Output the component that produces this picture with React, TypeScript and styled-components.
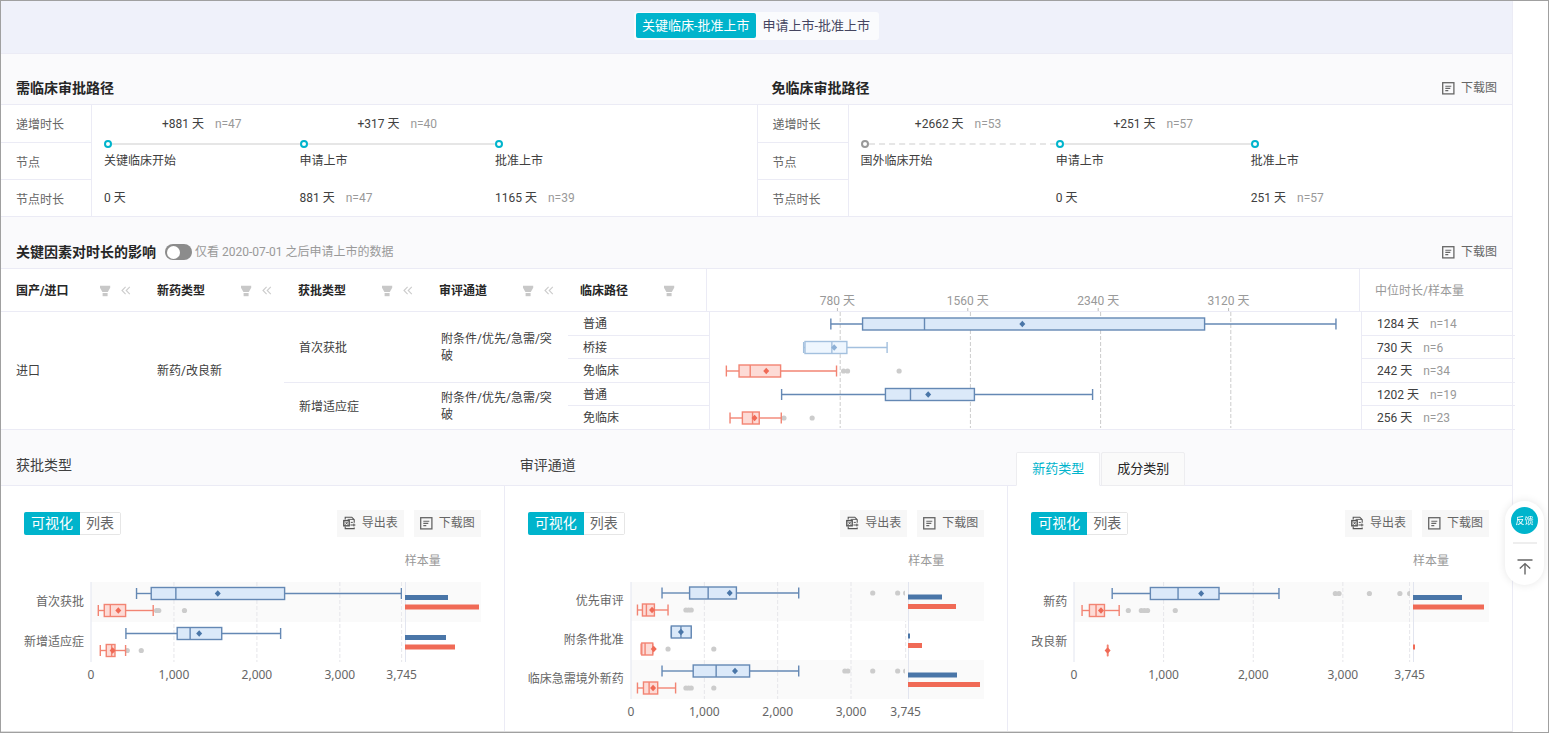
import React, { useState } from "react";
import styled, { createGlobalStyle, css } from "styled-components";

const color = {
  brand: "#00b4cc",
  line: "#ebebf5",
  head: "#fafafc",
  text: "#404040",
  strong: "#262626",
  sub: "#666",
  muted: "#999",
  blue: "#4a76a8",
  red: "#f06a56",
};

const GlobalStyle = createGlobalStyle`
  *, *::before, *::after { box-sizing: border-box; }
  body {
    margin: 0;
    background: #fff;
    color: ${color.text};
    font: 12px/18px Roboto, "Noto Sans CJK SC", sans-serif;
  }
  button { font: inherit; color: inherit; border: 0; padding: 0; background: none; cursor: pointer; }
  h2, ol { margin: 0; padding: 0; list-style: none; }
`;

const Frame = styled.div`
  display: flex;
  min-height: 100vh;
  padding-right: 35px;
  border: 1px solid #a0a0a0;
  overflow: hidden;
`;

const Main = styled.main`
  display: flex;
  flex: 1;
  flex-direction: column;
  min-width: 0;
  border-right: 1px solid ${color.line};
  border-bottom: 1px solid #ddd;
`;

/* Top switch */

const TopBar = styled.div`
  display: flex;
  justify-content: center;
  padding: 11px 0 13px;
  background: #eff1fa;
  border-bottom: 1px solid ${color.line};
`;

const Switcher = styled.div`
  display: flex;
  padding: 1px 2px 2px;
  background: #fafbfd;
  border-radius: 3px;
`;

const SwitchButton = styled.button<{ $active: boolean }>`
  padding: 0 ${(p) => (p.$active ? 6 : 7)}px;
  border-radius: 2px;
  font-size: 13px;
  line-height: 25px;
  color: ${(p) => (p.$active ? "#fff" : "#454560")};
  background: ${(p) => (p.$active ? color.brand : "transparent")};
`;

/* Section heads */

const SectionHead = styled.div<{ $top: number }>`
  display: flex;
  align-items: center;
  padding: ${(p) => p.$top}px 15px 6px;
  background: ${color.head};
  border-bottom: 1px solid ${color.line};
`;

const Title = styled.h2<{ $plain?: boolean }>`
  font-size: 14px;
  line-height: 20px;
  font-weight: ${(p) => (p.$plain ? 400 : 700)};
  color: ${(p) => (p.$plain ? color.text : color.strong)};
`;

const HalfTitle = styled(Title)`
  width: calc(50% + 15px);
`;

const ToolButton = styled.button<{ $filled?: boolean }>`
  display: flex;
  align-items: center;
  gap: 6px;
  color: ${color.sub};
  line-height: 20px;
  ${(p) =>
    p.$filled
      ? css`
          padding: 3px 6px 4px;
          background: #f7f7f7;
        `
      : css`
          margin-left: auto;
        `}
`;

/* Approval paths */

const Paths = styled.div`
  display: grid;
  grid-template-columns: 1fr 1fr;
  border-bottom: 1px solid ${color.line};
`;

const Path = styled.section`
  display: grid;
  grid-template-columns: 91px 1fr;
  & + & {
    border-left: 1px solid ${color.line};
  }
`;

const PathLabels = styled.div`
  display: grid;
  grid-template-rows: repeat(3, 1fr);
  border-right: 1px solid ${color.line};
`;

const PathLabel = styled.div`
  display: flex;
  align-items: center;
  padding: 3px 0 0 15px;
  color: ${color.sub};
  & + & {
    border-top: 1px solid ${color.line};
  }
`;

const Steps = styled.ol`
  display: grid;
  grid-template-columns: repeat(3, 1fr);
  padding: 0 66px 0 12px;
`;

const Increment = styled.div`
  display: flex;
  justify-content: center;
  height: 35px;
  line-height: 38px;
`;

const Track = styled.div<{ $kind: "solid" | "dashed" | "none" }>`
  display: flex;
  align-items: center;
  height: 8px;
  &::after {
    content: "";
    flex: 1;
    border-top: 2px ${(p) => p.$kind} #e6e6e6;
  }
`;

const Dot = styled.span<{ $muted?: boolean }>`
  width: 8px;
  height: 8px;
  border: 2px solid ${(p) => (p.$muted ? "#999" : color.brand)};
  border-radius: 50%;
  background: #fff;
`;

const StepName = styled.div`
  height: 25px;
  line-height: 27px;
`;

const StepTime = styled.div`
  padding: 13px 0 5px;
  line-height: 25px;
`;

const Count = styled.span`
  margin-left: 11px;
  color: ${color.muted};
`;

/* Factor table */

const Toggle = styled.label`
  display: flex;
  align-items: center;
  gap: 3px;
  margin-left: 9px;
  line-height: 20px;
  color: ${color.muted};
`;

const ToggleInput = styled.input`
  appearance: none;
  display: flex;
  align-items: center;
  width: 27px;
  height: 16px;
  margin: 0;
  padding: 1px 2px;
  border-radius: 8px;
  background: #8c8c8c;
  cursor: pointer;
  &::before {
    content: "";
    width: 13px;
    height: 13px;
    border-radius: 50%;
    background: #fff;
  }
  &:checked {
    justify-content: flex-end;
    background: ${color.brand};
  }
`;

const Table = styled.table<{ $spread?: number }>`
  width: calc(100% + ${(p) => p.$spread ?? 0}px);
  table-layout: fixed;
  border-collapse: separate;
  border-spacing: 0;
`;

const HeadCell = styled.th`
  height: 43px;
  padding: 2px 10px 0 15px;
  text-align: left;
  color: ${color.strong};
  border-bottom: 1px solid ${color.line};
`;

const HeadInner = styled.div`
  display: flex;
  align-items: center;
`;

const HeadName = styled.span`
  width: 83px;
`;

const IconButton = styled.button`
  display: flex;
  margin-right: 10px;
`;

const AxisHeadCell = styled(HeadCell)`
  padding: 0;
  border-left: 1px solid ${color.line};
  border-right: 1px solid ${color.line};
`;

const MedianHeadCell = styled(HeadCell)`
  font-weight: 400;
  color: ${color.muted};
`;

const Row = styled.tr`
  height: 23px;
  &:nth-child(odd) {
    height: 24px;
  }
`;

const Cell = styled.td<{ $right?: boolean }>`
  padding: 2px 15px 0;
  line-height: 17px;
  border-bottom: 1px solid ${color.line};
  border-right: ${(p) => (p.$right ? `1px solid ${color.line}` : 0)};
`;

const ChartCell = styled(Cell)`
  padding: 0;
  vertical-align: top;
`;

const Chart = styled.svg`
  display: block;
  width: 100%;
  overflow: visible;
`;

/* Distribution panels */

const PanelHeads = styled.div`
  display: grid;
  grid-template-columns: repeat(3, 1fr);
  height: 56px;
  background: ${color.head};
  border-bottom: 1px solid ${color.line};
`;

const PanelHead = styled.div`
  padding: 25px 15px 0;
`;

const Tabs = styled.div`
  display: flex;
  gap: 1px;
  margin-bottom: -1px;
  padding: 22px 8px 0;
`;

const Tab = styled.button<{ $active: boolean }>`
  padding: 0 15px;
  font-size: 13px;
  line-height: 32px;
  border: 1px solid #ededf0;
  border-bottom-color: ${(p) => (p.$active ? "#fff" : "#ededf0")};
  border-radius: 2px 2px 0 0;
  color: ${(p) => (p.$active ? color.brand : color.strong)};
  background: ${(p) => (p.$active ? "#fff" : "#fafafa")};
`;

const Panels = styled.div`
  display: grid;
  flex: 1;
  grid-template-columns: repeat(3, 1fr);
`;

const PanelBody = styled.section`
  padding: 24px 23px 8px;
  &:not(:last-child) {
    border-right: 1px solid ${color.line};
  }
`;

const PanelTools = styled.div`
  display: flex;
  align-items: center;
  gap: 10px;
`;

const ViewSwitch = styled.div`
  display: flex;
  margin-right: auto;
  border: 1px solid #e6e6e6;
  border-radius: 2px;
`;

const ViewButton = styled.button<{ $active: boolean }>`
  margin: ${(p) => (p.$active ? "-1px 0 -1px -1px" : "0")};
  padding: ${(p) => (p.$active ? "1px 7px" : "0 6px")};
  border-radius: ${(p) => (p.$active ? "2px 0 0 2px" : "0")};
  font-size: 14px;
  line-height: 21px;
  color: ${(p) => (p.$active ? "#fff" : color.sub)};
  background: ${(p) => (p.$active ? color.brand : "#fff")};
`;

const Plot = styled.div`
  display: grid;
  grid-template-columns: auto 1fr 79px;
  margin-top: 15px;
`;

const SampleTitle = styled.div`
  grid-column: 3;
  padding: 0 3px 12px;
  color: ${color.muted};
`;

const PlotLabels = styled.div`
  grid-column: 1;
  padding-right: 7px;
  text-align: right;
  color: ${color.sub};
`;

const PlotLabel = styled.div<{ $h: number }>`
  height: ${(p) => p.$h}px;
  line-height: ${(p) => p.$h}px;
`;

const AxisText = styled.text`
  font: 12px "Noto Sans", sans-serif;
  fill: ${color.sub};
`;

const HeadAxisText = styled.text`
  font-weight: 400;
  fill: ${color.muted};
`;

/* Floating tools */

const Floating = styled.aside`
  position: fixed;
  right: 5px;
  bottom: 148px;
  display: flex;
  flex-direction: column;
  align-items: center;
  width: 39px;
  padding: 6px 0 8px;
  border-radius: 20px;
  background: #fff;
  box-shadow: 0 0 8px rgba(0, 0, 0, 0.1);
`;

const Feedback = styled.button`
  width: 27px;
  height: 27px;
  border-radius: 50%;
  font-size: 9px;
  color: #fff;
  background: ${color.brand};
`;

const Divider = styled.span`
  width: 24px;
  height: 2px;
  margin: 8px 0 14px;
  background: #eee;
`;

const TopButton = styled.button`
  display: flex;
  padding: 1px 0 2px;
`;

/* Icons */

const DownloadIcon = () => (
  <svg width="13" height="13" viewBox="0 0 13 13" fill="none" stroke="#666" aria-hidden="true">
    <rect x="0.7" y="0.7" width="11.2" height="11.2" strokeWidth="1.3" />
    <path d="M3.3 4.2h6M3.3 6.4h5M3.3 8.6h3" strokeWidth="1.1" />
  </svg>
);

const ExportIcon = () => (
  <svg width="13" height="14" viewBox="0 0 13 14" fill="none" stroke="#555" aria-hidden="true">
    <path d="M2.2 3.6V1.2h6.6l2.4 2.5v3M2.2 10.6v2h9v-1.2" strokeWidth="1.1" />
    <path d="M4.6 3.4h6.4" strokeWidth="0.9" />
    <rect x="0.8" y="4.6" width="5.4" height="5.2" strokeWidth="1.4" />
    <path d="M2.4 5.8l2.4 2.8M4.8 5.8L2.4 8.6" strokeWidth="1" />
    <path d="M7.8 6.4h2M7.4 9h5M10.9 7.6v2.8" strokeWidth="1" />
  </svg>
);

const FilterIcon = () => (
  <svg width="12" height="12" viewBox="0 0 12 12" fill="#c8c8c8" aria-hidden="true">
    <path d="M1 0.8h10.2v2L8.8 7H3.4L1 2.8z" />
    <path d="M3.6 8h5v3.2h-5z" />
  </svg>
);

const CollapseIcon = () => (
  <svg width="10" height="9" viewBox="0 0 10 9" fill="none" stroke="#ccc" strokeWidth="1.1" aria-hidden="true">
    <path d="M4.6 0.8L1 4.5l3.6 3.7M8.8 0.8L5.2 4.5l3.6 3.7" />
  </svg>
);

const ToTopIcon = () => (
  <svg width="16" height="16" viewBox="0 0 16 16" fill="none" stroke="#666" strokeWidth="1.4" aria-hidden="true">
    <path d="M0.5 1h15M8 15.5V5M2.8 9.6L8 4.6l5.2 5" />
  </svg>
);

/* Box plots */

type Tone = "blue" | "light" | "red";

interface Box {
  tone: Tone;
  /** lower whisker, first quartile, median, third quartile, upper whisker */
  q: [number, number, number, number, number];
  mean: number;
  out?: number[];
}

const tones: Record<Tone, { fill: string; stroke: string; mark: string }> = {
  blue: { fill: "#dbe9f9", stroke: "#6488b4", mark: color.blue },
  light: { fill: "#eef6fe", stroke: "#a3c0de", mark: "#8db0d6" },
  red: { fill: "#fddbd6", stroke: "#f28473", mark: color.red },
};

function BoxMark({ box, cy, domain }: { box: Box; cy: number; domain: number }) {
  const x = (v: number) => `${(v / domain) * 100}%`;
  const [lo, q1, med, q3, hi] = box.q;
  const t = tones[box.tone];
  return (
    <g>
      {(box.out ?? []).map((v, i) => (
        <circle key={i} cx={x(v)} cy={cy} r="2.6" fill="#ccc" />
      ))}
      <g stroke={t.stroke} strokeWidth="1.4">
        <line x1={x(lo)} x2={x(q1)} y1={cy} y2={cy} />
        <line x1={x(q3)} x2={x(hi)} y1={cy} y2={cy} />
        <line x1={x(lo)} x2={x(lo)} y1={cy - 5.5} y2={cy + 5.5} />
        <line x1={x(hi)} x2={x(hi)} y1={cy - 5.5} y2={cy + 5.5} />
        {q3 > q1 && (
          <rect x={x(q1)} y={cy - 6} width={x(q3 - q1)} height="12" fill={t.fill} />
        )}
        <line x1={x(med)} x2={x(med)} y1={cy - 6} y2={cy + 6} />
      </g>
      <svg x={x(box.mean)} y={cy} overflow="visible">
        <path d="M0 -3.2L3 0L0 3.2L-3 0z" fill={t.mark} />
      </svg>
    </g>
  );
}

const FACTOR_DOMAIN = 3900;
const factorTicks = [780, 1560, 2340, 3120];

const factorBoxes: Box[] = [
  { tone: "blue", q: [724, 914, 1285, 2963, 3750], mean: 1871 },
  { tone: "light", q: [561, 569, 730, 820, 1061], mean: 744 },
  { tone: "red", q: [98, 174, 241, 423, 758], mean: 337, out: [800, 824, 1133] },
  { tone: "blue", q: [429, 1051, 1201, 1584, 2292], mean: 1307 },
  { tone: "red", q: [120, 194, 255, 295, 427], mean: 267, out: [443, 612] },
];

const FactorChart = () => (
  <Chart height="116" role="img" aria-label="时长分布">
    {factorTicks.map((v) => {
      const x = `${(v / FACTOR_DOMAIN) * 100}%`;
      return <line key={v} x1={x} x2={x} y1="0" y2="116" stroke="#ccc" strokeDasharray="4 2" />;
    })}
    {factorBoxes.map((b, i) => (
      <BoxMark key={i} box={b} cy={12 + i * 23.5} domain={FACTOR_DOMAIN} />
    ))}
  </Chart>
);

const FactorAxis = () => (
  <Chart height="42" role="img" aria-label="时长刻度">
    {factorTicks.map((v) => {
      const x = `${(v / FACTOR_DOMAIN) * 100}%`;
      return (
        <g key={v}>
          <HeadAxisText x={x} y="36" textAnchor="middle">
            {v} 天
          </HeadAxisText>
          <line x1={x} x2={x} y1="39" y2="42" stroke="#bbb" />
        </g>
      );
    })}
  </Chart>
);

interface Category {
  name: string;
  boxes: Box[];
  bars: { tone: "blue" | "red"; size: number }[];
}

const PLOT_DOMAIN = 3745;
const plotTicks = [0, 1000, 2000, 3000, 3745];

function Distribution({ data, rowHeight }: { data: Category[]; rowHeight: number }) {
  const height = data.length * rowHeight;
  const offset = (tone: Tone) => rowHeight / 2 + (tone === "red" ? 8.5 : -8.5);
  const stripes = data.map((d, i) =>
    i % 2 === 0 ? (
      <rect key={d.name} x="0" y={i * rowHeight} width="100%" height={rowHeight} fill="#fafafa" />
    ) : null
  );
  return (
    <Plot>
      <SampleTitle>样本量</SampleTitle>
      <PlotLabels>
        {data.map((d) => (
          <PlotLabel key={d.name} $h={rowHeight}>
            {d.name}
          </PlotLabel>
        ))}
      </PlotLabels>
      <Chart height={height + 24} role="img" aria-label="时长箱线图">
        {stripes}
        {plotTicks.map((v) => {
          const x = `${(v / PLOT_DOMAIN) * 100}%`;
          return (
            <g key={v}>
              <line
                x1={x}
                x2={x}
                y1="0"
                y2={height}
                stroke={v ? "#e6e6ea" : "#e2e5ef"}
                strokeDasharray={v ? "4 2" : undefined}
              />
              <AxisText x={x} y={height + 17} textAnchor="middle">
                {v.toLocaleString("en-US")}
              </AxisText>
            </g>
          );
        })}
        {data.map((d, i) =>
          d.boxes.map((b) => (
            <BoxMark key={d.name + b.tone} box={b} cy={i * rowHeight + offset(b.tone)} domain={PLOT_DOMAIN} />
          ))
        )}
      </Chart>
      <Chart height={height} role="img" aria-label="样本量">
        {stripes}
        <line x1="3.5" x2="3.5" y1="0" y2={height} stroke="#e2e5ef" />
        {data.map((d, i) =>
          d.bars.map((b) => (
            <rect
              key={d.name + b.tone}
              x="3"
              y={i * rowHeight + rowHeight / 2 + (b.tone === "red" ? 2.5 : -7)}
              width={b.size}
              height="5"
              fill={color[b.tone]}
            />
          ))
        )}
      </Chart>
    </Plot>
  );
}

const approvalType: Category[] = [
  {
    name: "首次获批",
    boxes: [
      { tone: "blue", q: [549, 726, 1023, 2334, 3742], mean: 1528 },
      { tone: "red", q: [88, 160, 233, 417, 750], mean: 329, out: [790, 817, 1127] },
    ],
    bars: [
      { tone: "blue", size: 43 },
      { tone: "red", size: 74 },
    ],
  },
  {
    name: "新增适应症",
    boxes: [
      { tone: "blue", q: [421, 1039, 1195, 1576, 2286], mean: 1304 },
      { tone: "red", q: [112, 184, 249, 289, 417], mean: 261, out: [437, 606] },
    ],
    bars: [
      { tone: "blue", size: 41 },
      { tone: "red", size: 50 },
    ],
  },
];

const reviewChannel: Category[] = [
  {
    name: "优先审评",
    boxes: [
      { tone: "blue", q: [423, 799, 1052, 1437, 2287], mean: 1346, out: [3296, 3636, 3745] },
      { tone: "red", q: [88, 156, 210, 319, 505], mean: 287, out: [749, 785, 821] },
    ],
    bars: [
      { tone: "blue", size: 34 },
      { tone: "red", size: 48 },
    ],
  },
  {
    name: "附条件批准",
    boxes: [
      { tone: "blue", q: [550, 550, 681, 821, 821], mean: 681 },
      { tone: "red", q: [138, 147, 192, 296, 296], mean: 310, out: [505, 1129] },
    ],
    bars: [
      { tone: "blue", size: 2 },
      { tone: "red", size: 14 },
    ],
  },
  {
    name: "临床急需境外新药",
    boxes: [
      { tone: "blue", q: [423, 848, 1161, 1617, 2287], mean: 1418, out: [2916, 2957, 3296, 3636, 3745] },
      { tone: "red", q: [88, 170, 247, 364, 608], mean: 301, out: [749, 785, 821, 1129] },
    ],
    bars: [
      { tone: "blue", size: 49 },
      { tone: "red", size: 72 },
    ],
  },
];

const drugType: Category[] = [
  {
    name: "新药",
    boxes: [
      { tone: "blue", q: [426, 852, 1161, 1618, 2287], mean: 1419, out: [2916, 2957, 3296, 3636, 3745] },
      { tone: "red", q: [90, 172, 246, 340, 504], mean: 301, out: [606, 751, 786, 821, 1130] },
    ],
    bars: [
      { tone: "blue", size: 49 },
      { tone: "red", size: 71 },
    ],
  },
  {
    name: "改良新",
    boxes: [{ tone: "red", q: [375, 375, 375, 375, 375], mean: 375 }],
    bars: [{ tone: "red", size: 2 }],
  },
];

/* Sections */

interface Step {
  name: string;
  time?: string;
  n?: string;
  gap?: string;
  gapN?: string;
  line: "solid" | "dashed" | "none";
}

const clinicalPath: Step[] = [
  { name: "关键临床开始", time: "0 天", gap: "+881 天", gapN: "n=47", line: "solid" },
  { name: "申请上市", time: "881 天", n: "n=47", gap: "+317 天", gapN: "n=40", line: "solid" },
  { name: "批准上市", time: "1165 天", n: "n=39", line: "none" },
];

const exemptPath: Step[] = [
  { name: "国外临床开始", gap: "+2662 天", gapN: "n=53", line: "dashed" },
  { name: "申请上市", time: "0 天", gap: "+251 天", gapN: "n=57", line: "solid" },
  { name: "批准上市", time: "251 天", n: "n=57", line: "none" },
];

const ApprovalPath = ({ steps }: { steps: Step[] }) => (
  <Path>
    <PathLabels>
      {["递增时长", "节点", "节点时长"].map((l) => (
        <PathLabel key={l}>{l}</PathLabel>
      ))}
    </PathLabels>
    <Steps>
      {steps.map((s) => (
        <li key={s.name}>
          <Increment>
            {s.gap}
            {s.gapN && <Count>{s.gapN}</Count>}
          </Increment>
          <Track $kind={s.line}>
            <Dot $muted={s.line === "dashed"} />
          </Track>
          <StepName>{s.name}</StepName>
          <StepTime>
            {s.time}
            {s.n && <Count>{s.n}</Count>}
          </StepTime>
        </li>
      ))}
    </Steps>
  </Path>
);

const columns = ["国产/进口", "新药类型", "获批类型", "审评通道", "临床路径"];

const FactorColumns = ({ width, last }: { width: number; last: number }) => (
  <colgroup>
    {columns.map((c, i) => (
      <col key={c} width={i === 0 ? 141 : width} />
    ))}
    <col />
    <col width={last} />
  </colgroup>
);

const Median = ({ days, n }: { days: number; n: number }) => (
  <Cell>
    {days} 天<Count>n={n}</Count>
  </Cell>
);

const FactorTable = () => (
  <div>
    <Table>
      <FactorColumns width={141} last={152} />
      <thead>
        <tr>
          {columns.map((c, i) => (
            <HeadCell key={c} scope="col">
              <HeadInner>
                <HeadName>{c}</HeadName>
                <IconButton aria-label={`筛选${c}`}>
                  <FilterIcon />
                </IconButton>
                {i < columns.length - 1 && (
                  <button aria-label={`收起${c}`}>
                    <CollapseIcon />
                  </button>
                )}
              </HeadInner>
            </HeadCell>
          ))}
          <AxisHeadCell scope="col">
            <FactorAxis />
          </AxisHeadCell>
          <MedianHeadCell scope="col">中位时长/样本量</MedianHeadCell>
        </tr>
      </thead>
    </Table>
    <Table $spread={3}>
      <FactorColumns width={142} last={153} />
      <tbody>
        <Row>
          <Cell rowSpan={5}>进口</Cell>
          <Cell rowSpan={5}>新药/改良新</Cell>
          <Cell rowSpan={3}>首次获批</Cell>
          <Cell rowSpan={3}>附条件/优先/急需/突破</Cell>
          <Cell $right>普通</Cell>
          <ChartCell rowSpan={5} $right>
            <FactorChart />
          </ChartCell>
          <Median days={1284} n={14} />
        </Row>
        <Row>
          <Cell $right>桥接</Cell>
          <Median days={730} n={6} />
        </Row>
        <Row>
          <Cell $right>免临床</Cell>
          <Median days={242} n={34} />
        </Row>
        <Row>
          <Cell rowSpan={2}>新增适应症</Cell>
          <Cell rowSpan={2}>附条件/优先/急需/突破</Cell>
          <Cell $right>普通</Cell>
          <Median days={1202} n={19} />
        </Row>
        <Row>
          <Cell $right>免临床</Cell>
          <Median days={256} n={23} />
        </Row>
      </tbody>
    </Table>
  </div>
);

const DownloadButton = ({ filled }: { filled?: boolean }) => (
  <ToolButton $filled={filled}>
    <DownloadIcon />
    下载图
  </ToolButton>
);

const Panel = ({ data, rowHeight }: { data: Category[]; rowHeight: number }) => (
  <PanelBody>
    <PanelTools>
      <ViewSwitch>
        <ViewButton $active>可视化</ViewButton>
        <ViewButton $active={false}>列表</ViewButton>
      </ViewSwitch>
      <ToolButton $filled>
        <ExportIcon />
        导出表
      </ToolButton>
      <DownloadButton filled />
    </PanelTools>
    <Distribution data={data} rowHeight={rowHeight} />
  </PanelBody>
);

export default function App() {
  const [route, setRoute] = useState(0);
  const [tab, setTab] = useState(0);
  return (
    <>
      <GlobalStyle />
      <Frame>
        <Main>
          <TopBar>
            <Switcher>
              {["关键临床-批准上市", "申请上市-批准上市"].map((label, i) => (
                <SwitchButton key={label} $active={route === i} onClick={() => setRoute(i)}>
                  {label}
                </SwitchButton>
              ))}
            </Switcher>
          </TopBar>

          <SectionHead $top={24}>
            <HalfTitle>需临床审批路径</HalfTitle>
            <Title>免临床审批路径</Title>
            <DownloadButton />
          </SectionHead>
          <Paths>
            <ApprovalPath steps={clinicalPath} />
            <ApprovalPath steps={exemptPath} />
          </Paths>

          <SectionHead $top={25}>
            <Title>关键因素对时长的影响</Title>
            <Toggle>
              <ToggleInput type="checkbox" role="switch" />
              仅看 2020-07-01 之后申请上市的数据
            </Toggle>
            <DownloadButton />
          </SectionHead>
          <FactorTable />

          <PanelHeads>
            <PanelHead>
              <Title $plain>获批类型</Title>
            </PanelHead>
            <PanelHead>
              <Title $plain>审评通道</Title>
            </PanelHead>
            <Tabs>
              {["新药类型", "成分类别"].map((label, i) => (
                <Tab key={label} $active={tab === i} onClick={() => setTab(i)}>
                  {label}
                </Tab>
              ))}
            </Tabs>
          </PanelHeads>
          <Panels>
            <Panel data={approvalType} rowHeight={40} />
            <Panel data={reviewChannel} rowHeight={39} />
            <Panel data={drugType} rowHeight={40} />
          </Panels>
        </Main>
      </Frame>
      <Floating>
        <Feedback>反馈</Feedback>
        <Divider />
        <TopButton aria-label="回到顶部">
          <ToTopIcon />
        </TopButton>
      </Floating>
    </>
  );
}
